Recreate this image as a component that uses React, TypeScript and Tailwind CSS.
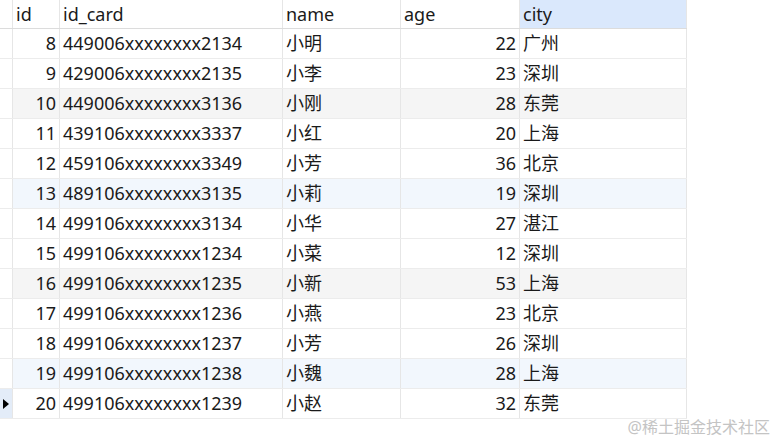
import React from 'react'

const rows = [
  { id: 8, card: '449006xxxxxxxx2134', name: '小明', age: 22, city: '广州' },
  { id: 9, card: '429006xxxxxxxx2135', name: '小李', age: 23, city: '深圳' },
  { id: 10, card: '449006xxxxxxxx3136', name: '小刚', age: 28, city: '东莞' },
  { id: 11, card: '439106xxxxxxxx3337', name: '小红', age: 20, city: '上海' },
  { id: 12, card: '459106xxxxxxxx3349', name: '小芳', age: 36, city: '北京' },
  { id: 13, card: '489106xxxxxxxx3135', name: '小莉', age: 19, city: '深圳' },
  { id: 14, card: '499106xxxxxxxx3134', name: '小华', age: 27, city: '湛江' },
  { id: 15, card: '499106xxxxxxxx1234', name: '小菜', age: 12, city: '深圳' },
  { id: 16, card: '499106xxxxxxxx1235', name: '小新', age: 53, city: '上海' },
  { id: 17, card: '499106xxxxxxxx1236', name: '小燕', age: 23, city: '北京' },
  { id: 18, card: '499106xxxxxxxx1237', name: '小芳', age: 26, city: '深圳' },
  { id: 19, card: '499106xxxxxxxx1238', name: '小魏', age: 28, city: '上海' },
  { id: 20, card: '499106xxxxxxxx1239', name: '小赵', age: 32, city: '东莞' },
]

const cell = 'h-full flex items-center border-r border-[#e6e6e6] px-[3px] whitespace-nowrap'

export default function App() {
  return (
    <div
      className="relative w-[778px] h-[442px] bg-white text-[#1a1a1a] text-[18px] overflow-hidden"
      style={{ fontFamily: '"Noto Sans", "Noto Sans CJK SC", sans-serif' }}
    >
      <div className="w-[687px]">
        {/* header */}
        <div className="flex h-[29px] border-b border-[#dcdcdc]">
          <div className={`${cell} w-[13px]`} />
          <div className={`${cell} w-[47px]`}>id</div>
          <div className={`${cell} w-[223px]`}>id_card</div>
          <div className={`${cell} w-[118px]`}>name</div>
          <div className={`${cell} w-[119px]`}>age</div>
          <div className={`${cell} w-[167px] bg-[#dae8fc]`}>city</div>
        </div>

        {rows.map((r, i) => {
          const selected = i === rows.length - 1
          const tint = i % 3 === 2 ? (i % 6 === 2 ? 'bg-[#f5f5f5]' : 'bg-[#f2f7fd]') : 'bg-white'
          return (
            <div key={r.id} className="flex h-[30px] border-b border-[#ececec]">
              <div className={`${cell} w-[13px] px-0 justify-center ${selected ? 'bg-[#e3ecf8]' : 'bg-white'}`}>
                {selected && (
                  <svg width="6" height="10" viewBox="0 0 6 10">
                    <path d="M0 0 L6 5 L0 10 Z" fill="#000" />
                  </svg>
                )}
              </div>
              <div className={`flex h-full ${tint}`}>
                <div className={`${cell} w-[47px] justify-end`}>{r.id}</div>
                <div className={`${cell} w-[223px]`}>{r.card}</div>
                <div className={`${cell} w-[118px]`}>{r.name}</div>
                <div className={`${cell} w-[119px] justify-end`}>{r.age}</div>
                <div className={`${cell} w-[167px]`}>{r.city}</div>
              </div>
            </div>
          )
        })}
      </div>

      <div className="absolute right-[8px] bottom-[3px] text-[16px] text-[#c4c4c4]">@稀土掘金技术社区</div>
    </div>
  )
}
